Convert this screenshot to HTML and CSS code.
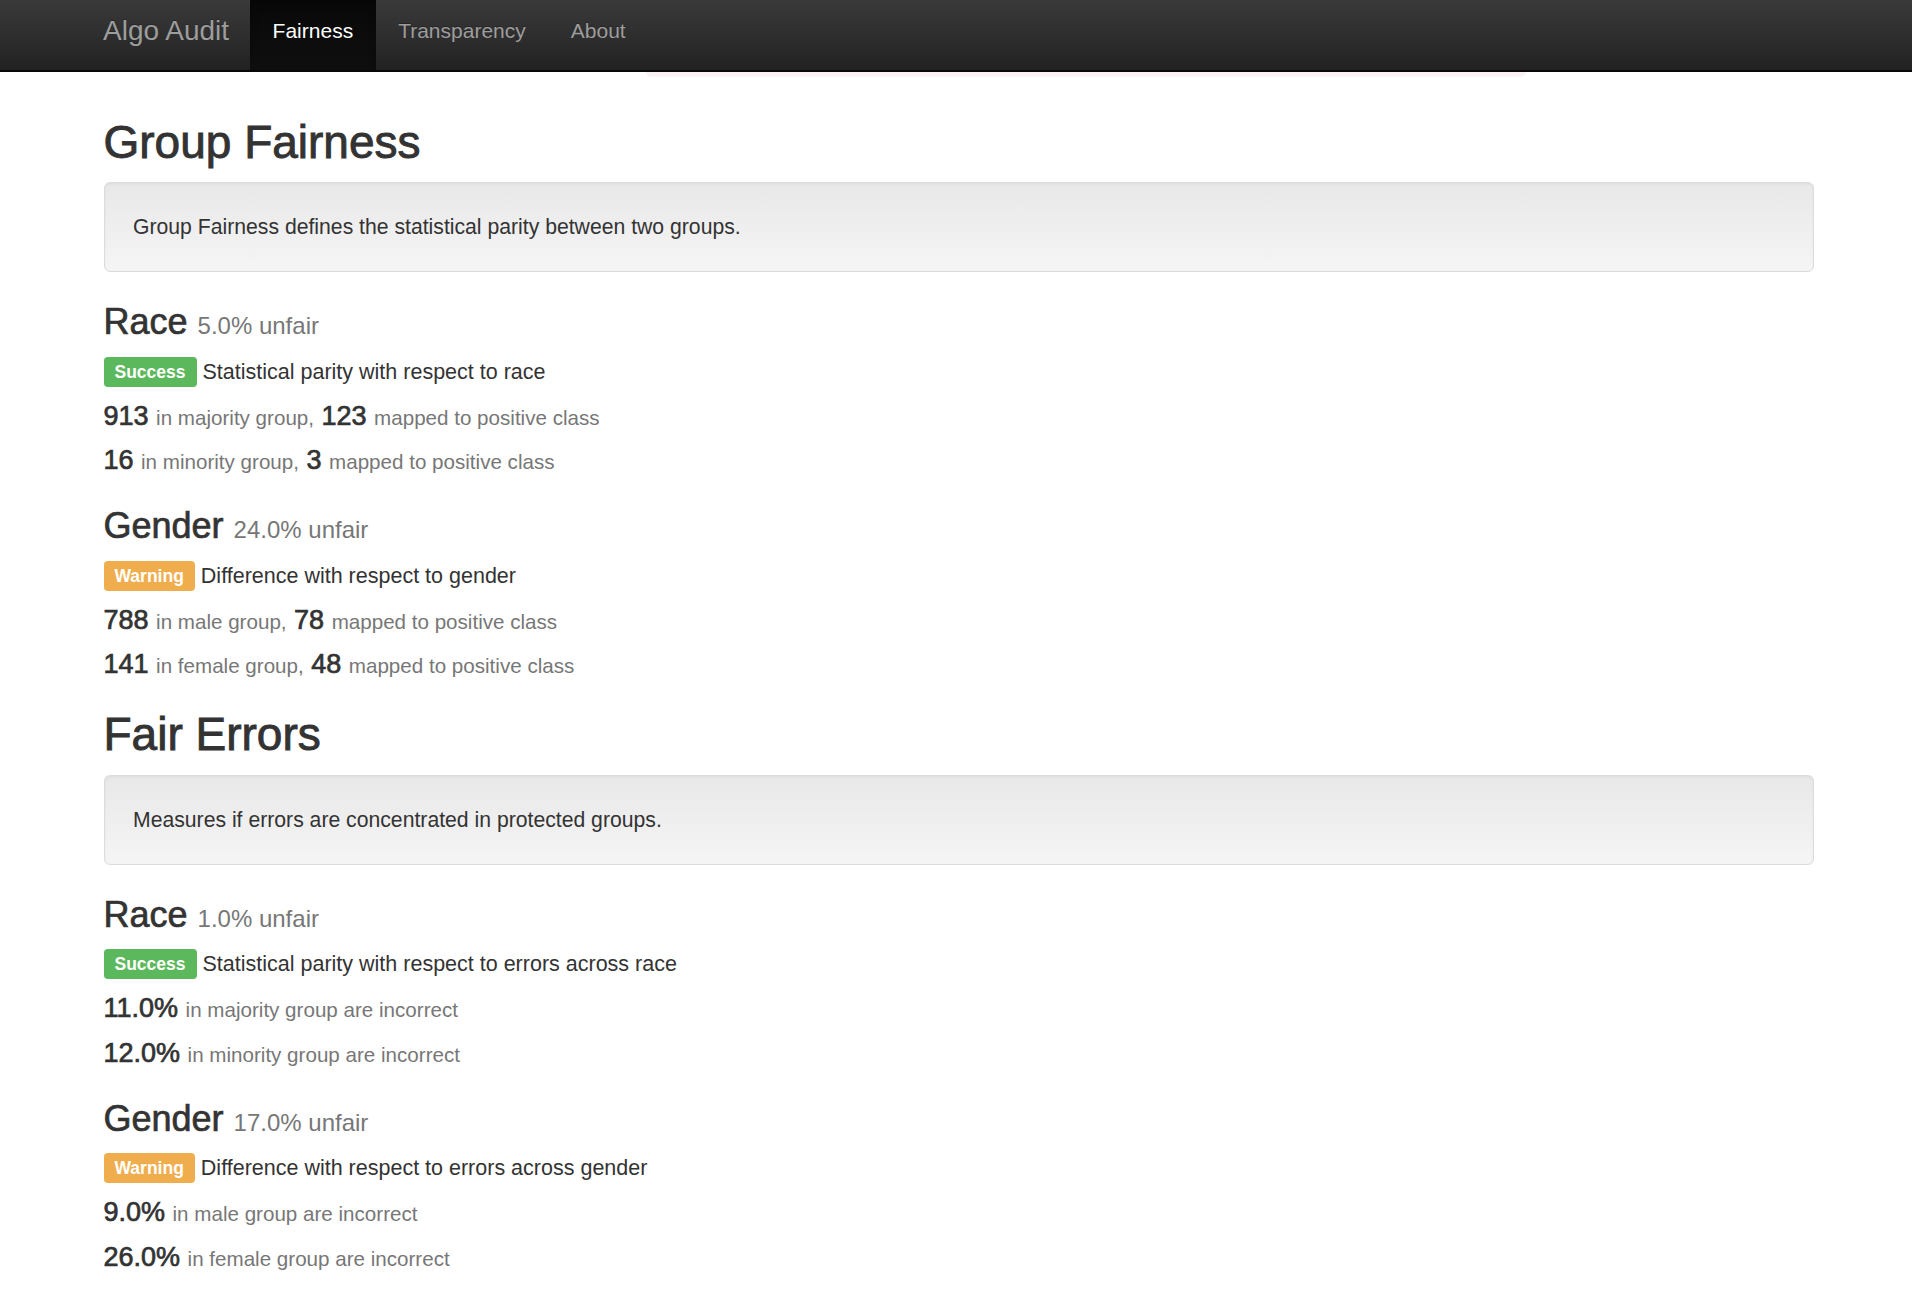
FILE: index.html
```html
<!DOCTYPE html>
<html lang="en">
<head>
<meta charset="utf-8">
<title>Algo Audit</title>
<link rel="stylesheet" href="styles.css">
</head>
<body>
<nav class="navbar">
  <div class="nav-inner">
    <a class="brand" href="#">Algo Audit</a>
    <ul class="nav-links">
      <li class="nav-item active"><a href="#">Fairness</a></li>
      <li class="nav-item"><a href="#">Transparency</a></li>
      <li class="nav-item"><a href="#">About</a></li>
    </ul>
  </div>
</nav>
<div class="flash-peek"></div>
<main class="page">
  <h2 class="section-title">Group Fairness</h2>
  <div class="well">Group Fairness defines the statistical parity between two groups.</div>

  <h3 class="metric-title">Race <small>5.0% unfair</small></h3>
  <p class="status"><span class="label label-success">Success</span><span class="status-text">Statistical parity with respect to race</span></p>
  <h4 class="stat">913 <small>in majority group,</small> 123 <small>mapped to positive class</small></h4>
  <h4 class="stat">16 <small>in minority group,</small> 3 <small>mapped to positive class</small></h4>

  <h3 class="metric-title">Gender <small>24.0% unfair</small></h3>
  <p class="status"><span class="label label-warning">Warning</span><span class="status-text">Difference with respect to gender</span></p>
  <h4 class="stat">788 <small>in male group,</small> 78 <small>mapped to positive class</small></h4>
  <h4 class="stat">141 <small>in female group,</small> 48 <small>mapped to positive class</small></h4>

  <h2 class="section-title">Fair Errors</h2>
  <div class="well">Measures if errors are concentrated in protected groups.</div>

  <h3 class="metric-title">Race <small>1.0% unfair</small></h3>
  <p class="status"><span class="label label-success">Success</span><span class="status-text">Statistical parity with respect to errors across race</span></p>
  <h4 class="stat">11.0% <small>in majority group are incorrect</small></h4>
  <h4 class="stat">12.0% <small>in minority group are incorrect</small></h4>

  <h3 class="metric-title">Gender <small>17.0% unfair</small></h3>
  <p class="status"><span class="label label-warning">Warning</span><span class="status-text">Difference with respect to errors across gender</span></p>
  <h4 class="stat">9.0% <small>in male group are incorrect</small></h4>
  <h4 class="stat">26.0% <small>in female group are incorrect</small></h4>
</main>
</body>
</html>
```

FILE: styles.css
```css
html, body {
  margin: 0;
  padding: 0;
}

body {
  font-family: "Liberation Sans", Arial, Helvetica, sans-serif;
  font-size: 21px;
  line-height: 30px;
  color: #333333;
  background: #ffffff;
}

a {
  text-decoration: none;
}

/* ---------- navbar ---------- */
.navbar {
  height: 70px;
  background: linear-gradient(to bottom, #3a3a3a 0%, #222222 100%);
  border-bottom: 2px solid #080808;
}

.nav-inner {
  width: 1710px;
  margin-left: 103px;
  display: flex;
  height: 70px;
}

.brand {
  display: block;
  margin-left: -22.5px;
  padding: 15.5px 21px 0 22.5px;
  font-size: 28px;
  line-height: 30px;
  color: #9d9d9d;
  text-shadow: 0 -1px 0 rgba(0, 0, 0, 0.25);
}

.nav-links {
  list-style: none;
  margin: 0;
  padding: 0;
  display: flex;
}

.nav-item a {
  display: block;
  height: 70px;
  box-sizing: border-box;
  padding: 16px 22.5px 0;
  line-height: 30px;
  font-size: 21px;
  color: #9d9d9d;
  text-shadow: 0 -1px 0 rgba(0, 0, 0, 0.25);
}

.nav-item.active a {
  color: #ffffff;
  background: linear-gradient(to bottom, #080808 0%, #0f0f0f 100%);
  box-shadow: inset 0 3px 9px rgba(0, 0, 0, 0.25);
}

.flash-peek {
  width: 880px;
  height: 5px;
  margin-left: 646px;
  background: #faf2f5;
  border-radius: 0 0 6px 6px;
}

/* ---------- page ---------- */
.page {
  width: 1710px;
  margin-left: 103.5px;
  padding-top: 10.5px;
}

.section-title {
  font-size: 46px;
  line-height: 49.5px;
  font-weight: 400;
  margin: 30px 0 15px;
  -webkit-text-stroke: 0.9px #333333;
}

.well {
  min-height: 30px;
  padding: 29px 28.5px;
  margin-bottom: 30px;
  border: 1px solid #dcdcdc;
  border-radius: 6px;
  background: linear-gradient(to bottom, #e8e8e8 0%, #f5f5f5 100%);
  box-shadow: inset 0 1px 3px rgba(0, 0, 0, 0.05), 0 1px 0 rgba(255, 255, 255, 0.1);
  font-size: 21.2px;
}

.metric-title {
  font-size: 36px;
  line-height: 39.6px;
  font-weight: 400;
  margin: 30px 0 15px;
  -webkit-text-stroke: 0.7px #333333;
}

.metric-title small {
  font-size: 24px;
  line-height: 1;
  color: #777777;
  -webkit-text-stroke: 0;
}

.status {
  display: flex;
  align-items: flex-start;
  gap: 6px;
  margin: 0 0 15px;
  line-height: 30px;
}

.status-text {
  font-size: 21.5px;
}

.label {
  display: block;
  height: 30px;
  box-sizing: border-box;
  padding: 1px 11px 0;
  line-height: 29px;
  font-size: 17.5px;
  font-weight: 700;
  color: #ffffff;
  border-radius: 4px;
  white-space: nowrap;
}

.label-success {
  background-color: #5cb85c;
}

.label-warning {
  background-color: #f0ad4e;
}

.stat {
  font-size: 27px;
  line-height: 29.7px;
  font-weight: 400;
  margin: 15px 0;
  -webkit-text-stroke: 0.7px #333333;
}

.stat small {
  font-size: 20.6px;
  line-height: 1;
  color: #777777;
  -webkit-text-stroke: 0;
}
```
